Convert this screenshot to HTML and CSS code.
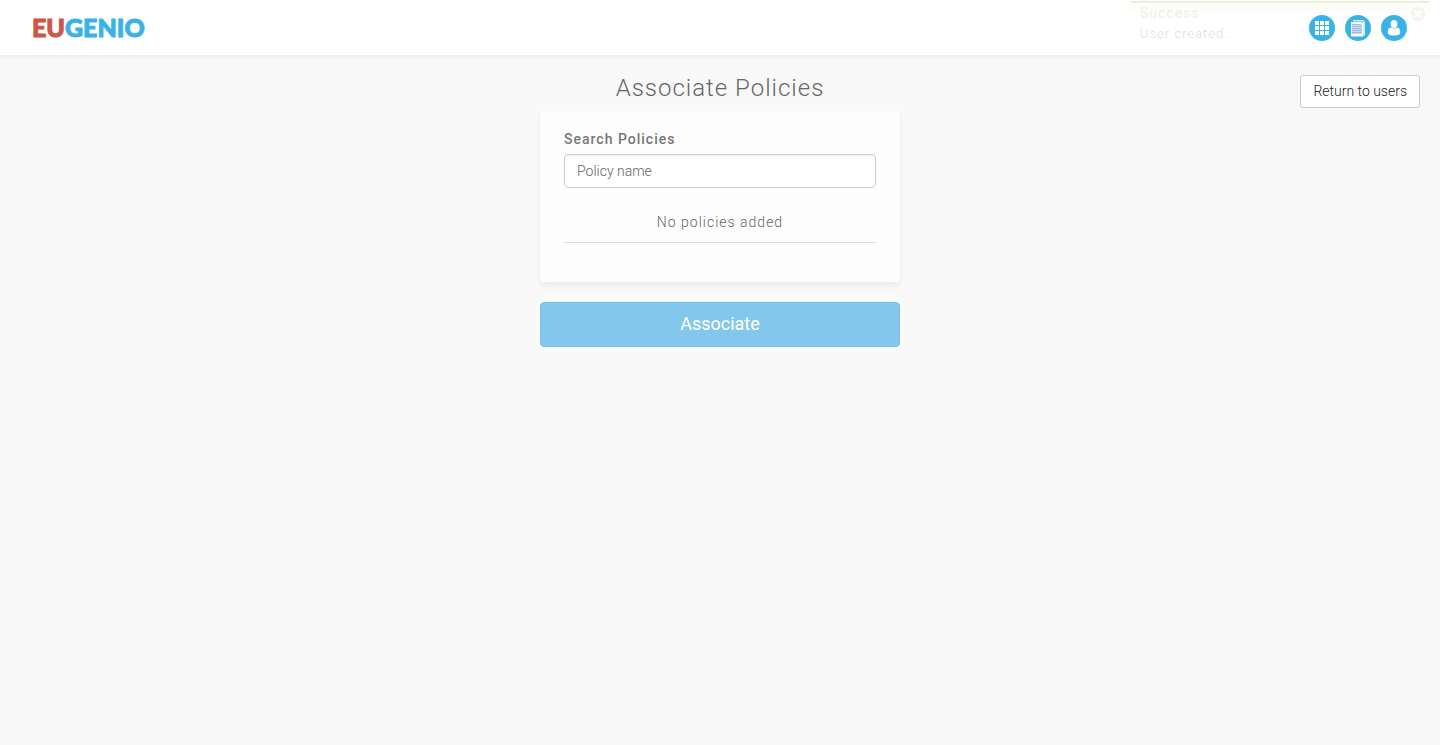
FILE: index.html
```html
<!DOCTYPE html>
<html lang="en">
<head>
<meta charset="utf-8">
<meta name="viewport" content="width=device-width, initial-scale=1">
<title>Associate Policies</title>
<link rel="stylesheet" href="styles.css">
</head>
<body>
<header class="topbar">
  <a class="logo" href="#"><span class="logo-accent">EU</span>GENIO</a>
  <nav class="nav" aria-label="Main">
    <a class="nav-link" href="#" aria-label="Applications">
      <svg viewBox="0 0 26 26"><circle cx="13" cy="13" r="13" fill="#39b3e7"/>
        <path fill="#fff" d="M6 6h4v4H6zM11 6h4v4h-4zM16 6h4v4h-4zM6 11h4v4H6zM11 11h4v4h-4zM16 11h4v4h-4zM6 16h4v4H6zM11 16h4v4h-4zM16 16h4v4h-4z"/></svg>
    </a>
    <a class="nav-link" href="#" aria-label="Documentation">
      <svg viewBox="0 0 26 26"><circle cx="13" cy="13" r="13" fill="#39b3e7"/>
        <path fill="#d3eefa" d="M8 5h10l2 2v13.500h-2V8l-1-1.500H8z"/>
        <path fill="#fff" d="M6 7h10.500L18 8.500V21.500H6z"/>
        <path fill="#c8daf4" d="M7 9h9v1h1v9H7z"/>
        <path stroke="#9dbbe8" d="M7 9.500h9M7 11.500h10M7 13.500h10M7 15.500h10M7 17.500h10"/></svg>
    </a>
    <a class="nav-link" href="#" aria-label="Account">
      <svg viewBox="0 0 26 26"><circle cx="13" cy="13" r="13" fill="#39b3e7"/>
        <ellipse cx="13" cy="9" rx="3.400" ry="4" fill="#fff"/>
        <path fill="#fff" d="M9.500 12.500q3.500 2.200 7 0c2 .4 2.700 2.500 2.700 4.800 0 2.500-1.700 3.200-6.200 3.200s-6.200-.7-6.200-3.200c0-2.300.7-4.400 2.700-4.800z"/></svg>
    </a>
  </nav>
</header>

<main class="page">
  <div class="content">
    <h1 class="title">Associate Policies</h1>
    <form class="form">
      <section class="card">
        <label class="label" for="policy">Search Policies</label>
        <input class="input" id="policy" type="text" placeholder="Policy name">
        <p class="empty">No policies added</p>
      </section>
      <button class="submit" type="submit" disabled>Associate</button>
    </form>
  </div>
  <div class="actions"><button class="return" type="button">Return to users</button></div>
</main>

<aside class="toast" role="status">
  <div class="toast-title">Success</div>
  <div class="toast-text">User created.</div>
  <button class="toast-close" type="button" aria-label="Close">
    <svg viewBox="0 0 14 14"><circle cx="7" cy="7" r="7" fill="#c8d8b4"/><path stroke="#fff" stroke-width="2.400" d="M3.500 3.500l7 7M10.500 3.500l-7 7"/></svg>
  </button>
</aside>
</body>
</html>
```
FILE: styles.css
```css
* {
  box-sizing: border-box;
}

body {
  margin: 0;
  background: #f9f9f9;
  color: #777;
  font: 300 14px/20px Roboto, sans-serif;
  letter-spacing: 1px;
}

.topbar {
  display: flex;
  align-items: center;
  justify-content: space-between;
  height: 55px;
  padding: 0 33px 0 32px;
  background: #fff;
  box-shadow: 0 1px 5px rgba(0, 0, 0, 0.08);
}

.logo {
  padding-bottom: 2px;
  color: #39b3e7;
  font: 900 25px/30px Lato, sans-serif;
  letter-spacing: 0;
  text-decoration: none;
  -webkit-text-stroke: 1px currentColor;
}

.logo-accent {
  color: #cf5549;
}

.nav {
  display: flex;
  gap: 10px;
}

.nav-link {
  width: 26px;
  height: 26px;
}

.nav-link svg,
.toast-close svg {
  display: block;
  width: 100%;
}

.page {
  display: grid;
  grid-template-columns: 1fr 360px 1fr;
  padding: 20px;
}

.content {
  grid-column: 2;
}

.title {
  margin: 0 0 10px;
  color: #666;
  font-size: 24px;
  font-weight: 300;
  line-height: 26px;
  text-align: center;
}

.card {
  margin-bottom: 20px;
  padding: 18px 24px 39px;
  border-radius: 4px;
  background: #fdfdfd;
  box-shadow: 0 4px 6px rgba(0, 0, 0, 0.06);
}

.label {
  display: block;
  margin-bottom: 5px;
  font-weight: 500;
}

.input {
  display: block;
  width: 100%;
  height: 34px;
  padding: 6px 12px;
  border: 1px solid #ccc;
  border-radius: 4px;
  background: #fff;
  box-shadow: inset 0 1px 1px rgba(0, 0, 0, 0.075);
  color: #555;
  font: 300 14px/20px Roboto, sans-serif;
}

.input::placeholder {
  color: #666;
}

.empty {
  margin: 24px 0 0;
  padding-bottom: 10px;
  border-bottom: 1px solid #ddd;
  color: #666;
  text-align: center;
}

.submit {
  display: block;
  width: 100%;
  height: 45px;
  padding: 0 0 2px;
  border: 1px solid #74c2ea;
  border-radius: 4px;
  background: #83c8ec;
  color: #fff;
  font: 400 18px/24px Roboto, sans-serif;
}

.actions {
  justify-self: end;
}

.return {
  height: 33px;
  padding: 0 12px 2px;
  border: 1px solid #ccc;
  border-radius: 3px;
  background: #fff;
  color: #222;
  font: 300 14px/20px Roboto, sans-serif;
}

.toast {
  position: absolute;
  top: 1px;
  right: 10px;
  width: 300px;
  height: 10px;
  padding: 0 10px;
  border-top: 2px solid #a5ca7b;
  border-radius: 2px;
  background: #f9faee;
  box-shadow: 0 0 1px #a5ca7b;
  opacity: 0.25;
}

.toast-title {
  color: #a5ca7b;
  font-weight: 400;
}

.toast-text {
  font-size: 13px;
  line-height: 22px;
}

.toast-close {
  position: absolute;
  top: 4px;
  right: 5px;
  width: 14px;
  height: 14px;
  padding: 0;
  border: 0;
  background: none;
}
```
